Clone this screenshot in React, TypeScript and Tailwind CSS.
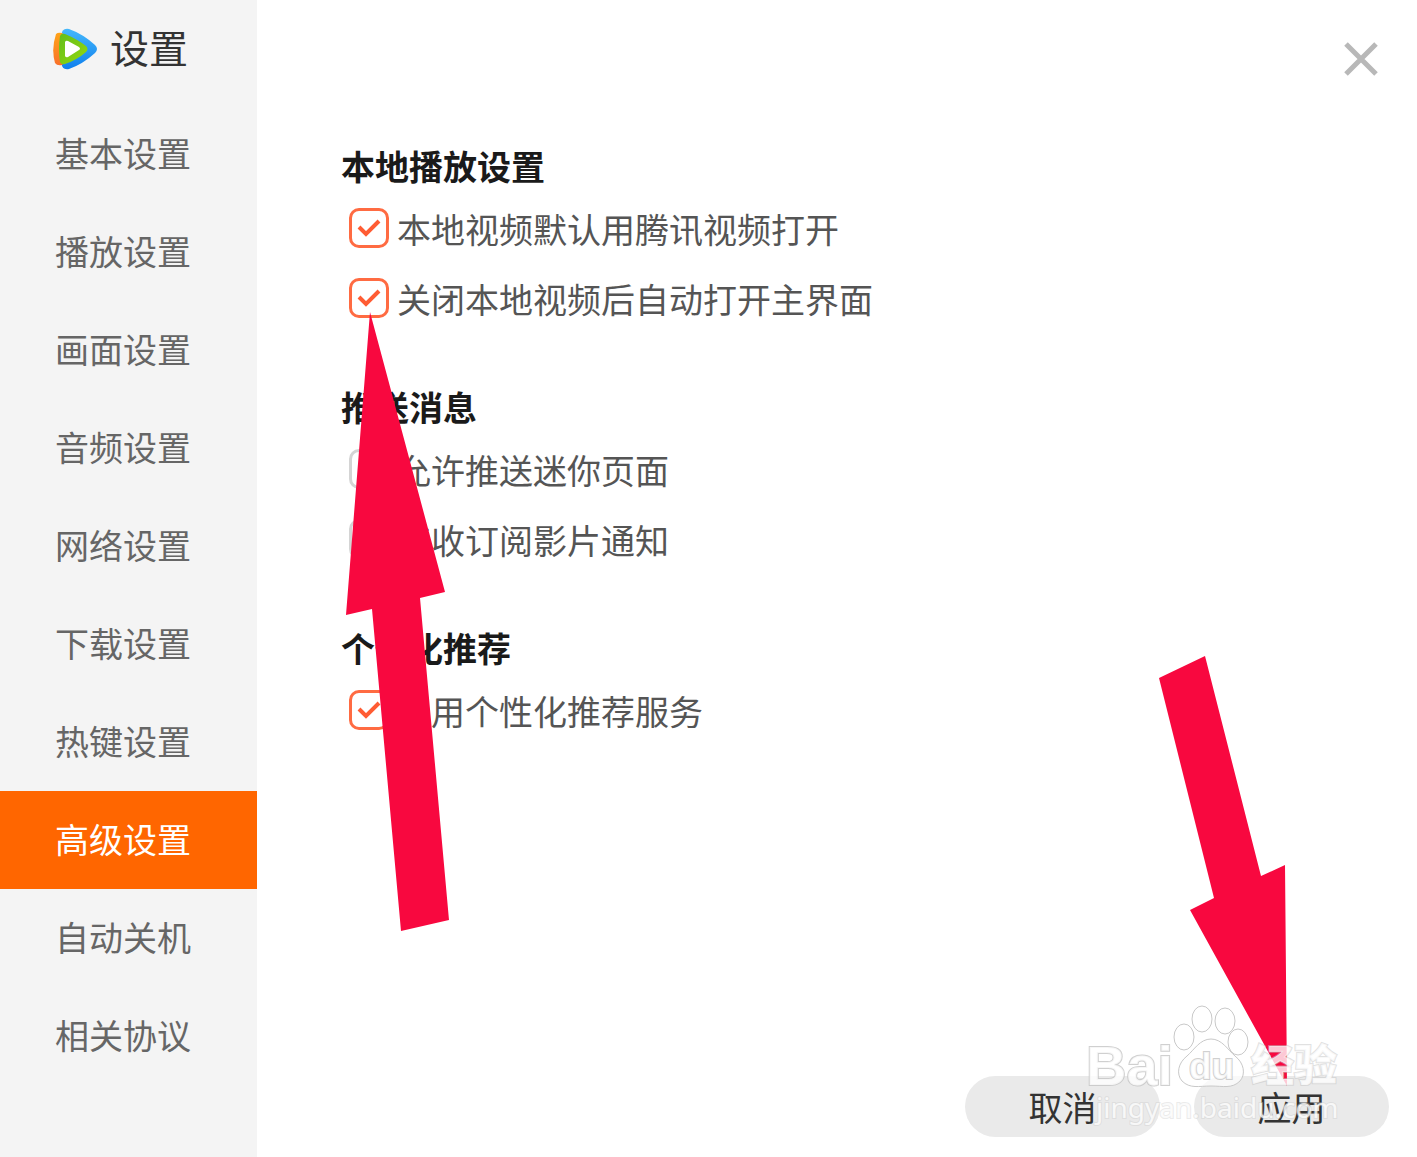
import { useState } from "react";

const navItems = [
  "基本设置",
  "播放设置",
  "画面设置",
  "音频设置",
  "网络设置",
  "下载设置",
  "热键设置",
  "高级设置",
  "自动关机",
  "相关协议",
];

const sections = [
  {
    title: "本地播放设置",
    options: [
      { id: "default-player", label: "本地视频默认用腾讯视频打开", on: true },
      { id: "open-main", label: "关闭本地视频后自动打开主界面", on: true },
    ],
  },
  {
    title: "推送消息",
    options: [
      { id: "push-mini", label: "允许推送迷你页面", on: false },
      { id: "notify-film", label: "接收订阅影片通知", on: false },
    ],
  },
  {
    title: "个性化推荐",
    options: [{ id: "recommend", label: "启用个性化推荐服务", on: true }],
  },
];

function Logo() {
  return (
    <svg width="46" height="42" viewBox="0 0 46 42" aria-hidden="true">
      <defs>
        <linearGradient id="logoBlue" x1="0" y1="0" x2="0" y2="1">
          <stop offset="0" stopColor="#45b8fb" />
          <stop offset="1" stopColor="#0f7fee" />
        </linearGradient>
        <linearGradient id="logoOrange" x1="0" y1="0" x2="0" y2="1">
          <stop offset="0" stopColor="#ffa317" />
          <stop offset="1" stopColor="#f9702a" />
        </linearGradient>
        <linearGradient id="logoGreen" x1="0" y1="0" x2="1" y2="1">
          <stop offset="0" stopColor="#62bd1b" />
          <stop offset="1" stopColor="#96d90f" />
        </linearGradient>
      </defs>
      <path
        d="M10 4Q12 0 17 1Q31 6 43 17Q47 21 43 25Q31 36 17 41Q12 42 10 38Q7 21 10 4Z"
        fill="url(#logoBlue)"
      />
      <path d="M4 6Q6 4 10 5L14 8V34L10 37Q5 38 3 35Q-1 21 4 6Z" fill="url(#logoOrange)" />
      <path
        d="M8 8Q9 5 13 6Q25 11 34 18Q37 21 34 24Q25 32 13 36Q9 37 8 34Q6 21 8 8Z"
        fill="url(#logoGreen)"
      />
      <path d="M13 14Q14 12 16 13L27 19Q29 21 27 22L16 29Q14 30 13 28Z" fill="#ffffff" />
    </svg>
  );
}

function Option({ id, label, on }: { id: string; label: string; on: boolean }) {
  const [checked, setChecked] = useState(on);
  return (
    <label htmlFor={id} className="flex h-[70px] items-center gap-2 text-[34px] text-[#555555]">
      <span className="grid size-10 shrink-0 place-items-center">
        <input
          id={id}
          type="checkbox"
          checked={checked}
          onChange={() => setChecked(!checked)}
          className="col-start-1 row-start-1 size-10 appearance-none rounded-[10px] border-3 border-[#d4d4d4] bg-white checked:border-[#ff6b42]"
        />
        {checked && (
          <svg
            width="24"
            height="20"
            viewBox="0 0 24 20"
            fill="none"
            className="pointer-events-none col-start-1 row-start-1"
            aria-hidden="true"
          >
            <path d="M2 9L9 16L22 3" stroke="#ff5c33" strokeWidth="4" />
          </svg>
        )}
      </span>
      <span className="whitespace-nowrap">{label}</span>
    </label>
  );
}

function Watermark() {
  return (
    <svg
      width="270"
      height="130"
      viewBox="0 0 270 130"
      className="pointer-events-none absolute right-[67px] bottom-[27px]"
      aria-hidden="true"
    >
      <g fill="#ffffff" fillOpacity="0.7" stroke="#c9c9c9" strokeWidth="1">
        <ellipse cx="104" cy="37" rx="10" ry="13" />
        <ellipse cx="122" cy="19" rx="10" ry="13" />
        <ellipse cx="145" cy="21" rx="10" ry="13" />
        <ellipse cx="158" cy="42" rx="10" ry="13" />
        <path d="M131 39C142 39 148 50 155 56C164 63 166 74 160 81C152 89 143 86 131 86C119 86 110 89 102 81C96 74 98 63 107 56C114 50 120 39 131 39Z" />
      </g>
      <g
        fill="#ffffff"
        fillOpacity="0.8"
        stroke="#c4c4c4"
        strokeOpacity="0.8"
        strokeWidth="2"
        paintOrder="stroke"
      >
        <text x="6" y="85" fontSize="56" fontWeight="700" fontFamily="Liberation Sans, sans-serif">
          Bai
        </text>
        <text x="109" y="79" fontSize="37" fontWeight="700" fontFamily="Liberation Sans, sans-serif">
          du
        </text>
        <text
          x="171"
          y="81"
          fontSize="43"
          fontWeight="900"
          strokeOpacity="0.5"
          fontFamily="Noto Sans CJK SC, sans-serif"
        >
          经验
        </text>
      </g>
      <text
        x="16"
        y="118"
        fontSize="28"
        fontFamily="Noto Sans, sans-serif"
        fill="#ffffff"
        fillOpacity="0.8"
        stroke="#cccccc"
        strokeOpacity="0.4"
        strokeWidth="2"
        paintOrder="stroke"
      >
        jingyan.baidu.com
      </text>
    </svg>
  );
}

export default function App() {
  const [active, setActive] = useState("高级设置");

  return (
    <div className="flex min-h-screen bg-white font-['Noto_Sans_CJK_SC',sans-serif]">
      <aside className="w-[257px] shrink-0 bg-[#f4f4f4]">
        <div className="flex h-[105px] items-start gap-3 pt-7 pl-[52px]">
          <Logo />
          <h1 className="text-[39px] leading-9 text-[#333333]">设置</h1>
        </div>
        <nav>
          {navItems.map((item) => (
            <button
              key={item}
              type="button"
              onClick={() => setActive(item)}
              className={
                item === active
                  ? "block h-[98px] w-full bg-[#ff6600] pb-1 pl-[55px] text-left text-[34px] text-white"
                  : "block h-[98px] w-full pb-1 pl-[55px] text-left text-[34px] text-[#666666]"
              }
            >
              {item}
            </button>
          ))}
        </nav>
      </aside>

      <main className="relative flex min-w-0 flex-1 flex-col">
        <header className="flex h-[139px] items-start justify-end pt-[35px] pr-8">
          <button type="button" aria-label="关闭" className="grid size-12 place-items-center">
            <svg width="36" height="36" viewBox="0 0 36 36" fill="none" aria-hidden="true">
              <path d="M3 3L33 33M33 3L3 33" stroke="#b8b8b8" strokeWidth="5" />
            </svg>
          </button>
        </header>

        <div className="flex flex-col gap-[47px] pl-[84px]">
          {sections.map((section) => (
            <section key={section.title}>
              <h2 className="text-[34px] leading-[54px] font-bold text-[#1a1a1a]">
                {section.title}
              </h2>
              <div className="pl-2">
                {section.options.map((option) => (
                  <Option key={option.id} {...option} />
                ))}
              </div>
            </section>
          ))}
        </div>

        <footer className="mt-auto flex justify-end gap-[34px] pr-7 pb-5">
          <button
            type="button"
            className="h-[61px] w-[195px] rounded-full bg-[#eaeaea] text-[34px] leading-[61px] text-[#333333]"
          >
            取消
          </button>
          <button
            type="button"
            className="h-[61px] w-[195px] rounded-full bg-[#eaeaea] text-[34px] leading-[61px] text-[#333333]"
          >
            应用
          </button>
        </footer>

        <svg
          width="104"
          height="620"
          viewBox="0 0 104 620"
          className="pointer-events-none absolute top-[312px] left-[88px]"
          aria-hidden="true"
        >
          <path d="M25 0L100 280L75 286L104 608L56 619L27 297L1 303Z" fill="#f8083f" />
        </svg>
        <svg
          width="130"
          height="432"
          viewBox="0 0 130 432"
          className="pointer-events-none absolute right-[129px] bottom-[70px]"
          aria-hidden="true"
        >
          <path d="M1 23L47 1L103 221L127 210L129 431L32 255L56 243Z" fill="#f8083f" />
        </svg>
        <Watermark />
      </main>
    </div>
  );
}
